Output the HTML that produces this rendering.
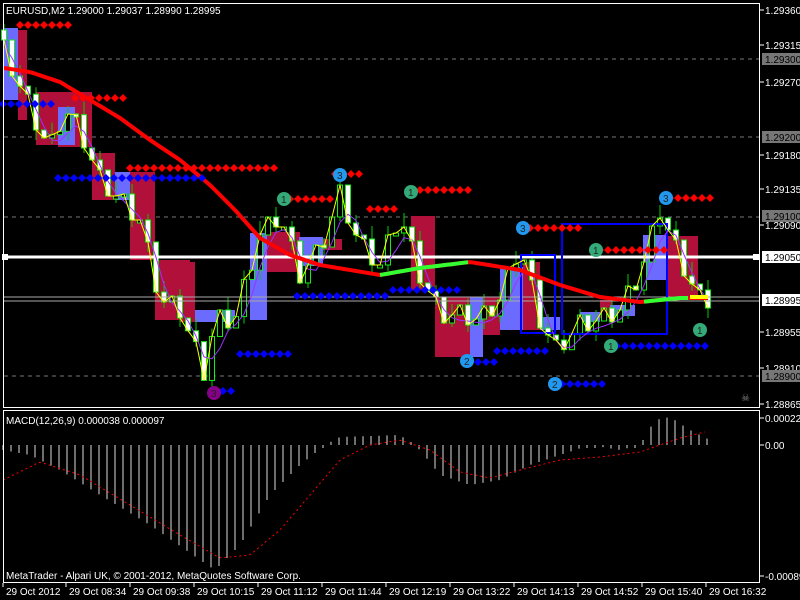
<!DOCTYPE html>
<html><head><meta charset="utf-8"><style>
html,body{margin:0;padding:0;background:#000;width:800px;height:600px;overflow:hidden}
svg{display:block}
text{font-family:"Liberation Sans",sans-serif;font-size:10px}
</style></head><body>
<svg id="s" width="800" height="600" xmlns="http://www.w3.org/2000/svg">
<rect width="800" height="600" fill="#000"/>
<g id="g"></g>
<rect x="3.5" y="3.5" width="756" height="404" fill="none" stroke="#fff"/>
<rect x="3.5" y="410.5" width="756" height="172" fill="none" stroke="#fff"/>
<text x="6" y="14" fill="#fff">EURUSD,M2  1.29000 1.29037 1.28990 1.28995</text>
<text x="6" y="424" fill="#fff">MACD(12,26,9) 0.000038 0.000097</text>
<text x="6" y="579" fill="#fff">MetaTrader - Alpari UK, © 2001-2012, MetaQuotes Software Corp.</text>
<text x="741" y="401" fill="#888" font-size="13">☠</text>
</svg>
<script>
var g=document.getElementById('g'),h='';
function L(k,x){for(var i=0;i<k.length-1;i++){if(x<=k[i+1][0]){var t=(x-k[i][0])/(k[i+1][0]-k[i][0]);return k[i][1]+t*(k[i+1][1]-k[i][1]);}}return k[k.length-1][1];}
[59,137,217,376].forEach(function(y){h+='<line x1="4" x2="759" y1="'+y+'" y2="'+y+'" stroke="#777" stroke-dasharray="4,4"/>';});
var cr=[[18,30,27,120],[36,92,58,145],[58,92,92,147],[92,153,115,200],[130,172,155,260],[155,260,190,320],[180,262,195,322],[267,232,300,272],[323,239,342,250],[411,216,435,290],[435,297,483,357],[482,297,500,335],[523,262,540,330],[668,236,698,297],[600,300,612,318]];
var bl=[[3,28,18,100],[58,107,75,145],[115,172,130,200],[195,310,235,322],[250,233,267,320],[299,237,323,266],[470,297,483,357],[500,267,523,330],[540,317,560,330],[610,305,635,316],[643,235,668,280],[580,312,600,322]];
cr.forEach(function(r){h+='<rect x="'+r[0]+'" y="'+r[1]+'" width="'+(r[2]-r[0])+'" height="'+(r[3]-r[1])+'" fill="#b0103a"/>';});
bl.forEach(function(r){h+='<rect x="'+r[0]+'" y="'+r[1]+'" width="'+(r[2]-r[0])+'" height="'+(r[3]-r[1])+'" fill="#6b6bff"/>';});
var K=[[4,50],[35,120],[50,150],[65,110],[80,130],[100,180],[120,200],[140,220],[160,300],[180,310],[205,375],[215,320],[235,320],[260,235],[280,215],[300,275],[320,250],[340,195],[360,245],[380,265],[400,215],[420,275],[440,315],[460,315],[480,320],[500,300],[520,245],[540,320],[556,350],[580,325],[600,320],[620,310],[640,275],[660,210],[680,260],[700,300],[708,300]];
var c=[];
for(var i=0;i<=88;i++){var x=4+8*i;var y=L(K,x)+((i%3==0)?-10:(i%3==1?8:0));c.push([x,y]);}
for(var i=0;i<c.length;i++){var x=c[i][0],y=c[i][1],o=i?c[i-1][1]:y-10;var t=Math.min(o,y),b=Math.max(o,y);if(b-t<3)b=t+3;
 if(i%2==0)h+='<line x1="'+x+'" x2="'+x+'" y1="'+(t-6-(i*7%9))+'" y2="'+(b+4+(i*5%7))+'" stroke="#0c0"/>';
 h+='<rect x="'+(x-2.5)+'" y="'+t+'" width="5" height="'+(b-t)+'" fill="'+(y>o?'#fff':'#000')+'" stroke="#1e1"/>';}
h+='<line x1="4" x2="759" y1="297" y2="297" stroke="#aaa"/><line x1="4" x2="759" y1="301" y2="301" stroke="#aaa"/>';
h+='<line x1="4" x2="759" y1="257" y2="257" stroke="#fff" stroke-width="3"/><rect x="2" y="254" width="6" height="6" fill="#fff"/><rect x="753" y="254" width="7" height="6" fill="#fff"/>';
h+='<rect x="521" y="255" width="34" height="78" fill="none" stroke="#00f" stroke-width="2"/><rect x="562" y="224" width="105" height="110" fill="none" stroke="#00f" stroke-width="2"/>';
var p='';for(var i=0;i<c.length;i++){var a=c[Math.max(0,i-2)][1],b=c[i][1],d=c[Math.max(0,i-1)][1];p+=(i?'L':'M')+c[i][0]+','+((a+b+d)/3+6).toFixed(1);}
h+='<path d="'+p+'" fill="none" stroke="#93f"/>';
p='';c.forEach(function(q,i){p+=(i?'L':'M')+q[0]+','+q[1];});h+='<path d="'+p+'" fill="none" stroke="#ff0"/>';
var M=[[4,68],[30,72],[60,82],[90,100],[120,118],[150,140],[180,160],[210,185],[235,210],[260,238],[290,255],[320,265],[380,275],[420,268],[470,262],[520,270],[560,285],[600,297],[640,302],[680,298],[708,298]];
p='';for(var x=4;x<=708;x+=4)p+=(x>4?'L':'M')+x+','+L(M,x).toFixed(1);
h+='<path d="'+p+'" fill="none" stroke="#f00" stroke-width="4" stroke-linejoin="round"/>';
p='';for(var x=380;x<=470;x+=4)p+=(x>380?'L':'M')+x+','+L(M,x).toFixed(1);h+='<path d="'+p+'" fill="none" stroke="#3f3" stroke-width="4"/>';
p='';for(var x=644;x<=690;x+=4)p+=(x>644?'L':'M')+x+','+L(M,x).toFixed(1);h+='<path d="'+p+'" fill="none" stroke="#3f3" stroke-width="4"/>';
h+='<line x1="690" x2="708" y1="297" y2="297" stroke="#ff0" stroke-width="4"/>';
var D=[['r',25,20,68],['r',98,75,125],['r',168,130,278],['b',104,3,52],['b',178,58,205],['r',174,335,365],['r',199,290,330],['r',190,420,475],['r',209,370,400],['b',296,297,390],['b',290,393,460],['b',354,240,295],['b',391,215,237],['b',362,478,494],['b',351,497,550],['b',384,562,605],['r',228,530,580],['r',250,600,665],['b',346,617,710],['r',198,670,710]];
D.forEach(function(d){for(var x=d[2];x<=d[3];x+=8)h+='<path d="M'+x+','+(d[1]-4)+'l4,4l-4,4l-4,-4z" fill="'+(d[0]=='r'?'#f00':'#00f')+'"/>';});
var C=[[214,393,'#808','3'],[284,199,'#3a7','1'],[340,175,'#29e','3'],[411,192,'#3a7','1'],[467,361,'#29e','2'],[523,228,'#29e','3'],[555,384,'#29e','2'],[596,250,'#3a7','1'],[611,346,'#3a7','1'],[666,198,'#29e','3'],[700,330,'#3a7','1']];
C.forEach(function(q){h+='<circle cx="'+q[0]+'" cy="'+q[1]+'" r="7" fill="'+q[2]+'"/><text x="'+(q[0]-3)+'" y="'+(q[1]+4)+'" fill="#222" font-size="11">'+q[3]+'</text>';});
var HK=[[3,-5],[30,-10],[60,-25],[100,-50],[150,-80],[200,-115],[215,-125],[240,-100],[270,-50],[300,-20],[325,0],[340,8],[400,10],[420,-5],[440,-30],[470,-40],[500,-35],[530,-20],[560,-10],[590,0],[620,-5],[640,0],[655,25],[670,28],[690,15],[710,5]];
for(var x=3;x<=710;x+=8){var v=L(HK,x);if(Math.abs(v)<2)v=v<0?-3:3;h+='<line x1="'+x+'" x2="'+x+'" y1="445" y2="'+(445-v)+'" stroke="#ddd"/>';}
var SK=[[3,480],[40,462],[80,475],[130,505],[180,535],[220,558],[250,555],[280,530],[310,495],[340,460],[370,445],[400,440],[430,450],[460,472],[490,478],[520,470],[560,460],[600,457],[640,452],[680,438],[705,432]];
p='';for(var x=3;x<=705;x+=3)p+=(x>3?'L':'M')+x+','+L(SK,x).toFixed(1);
h+='<path d="'+p+'" fill="none" stroke="#f00" stroke-dasharray="2,3"/>';
var A=[[10,'1.29360'],[45,'1.29315'],[82,'1.29270'],[155,'1.29180'],[189,'1.29135'],[225,'1.29090'],[332,'1.28955'],[368,'1.28910'],[404,'1.28865'],[418,'0.000224'],[445,'0.00'],[576,'-0.00089']];
A.forEach(function(a){h+='<line x1="760" x2="764" y1="'+a[0]+'" y2="'+a[0]+'" stroke="#fff"/><text x="765" y="'+(a[0]+4)+'" fill="#fff">'+a[1]+'</text>';});
[[59,'1.29300'],[137,'1.29200'],[216,'1.29100'],[376,'1.28900']].forEach(function(a){h+='<rect x="762" y="'+(a[0]-6)+'" width="38" height="12" fill="#777"/><text x="765" y="'+(a[0]+4)+'" fill="#000">'+a[1]+'</text>';});
[[257,'1.29050'],[300,'1.28995']].forEach(function(a){h+='<rect x="762" y="'+(a[0]-6)+'" width="38" height="12" fill="#fff"/><text x="765" y="'+(a[0]+4)+'" fill="#000">'+a[1]+'</text>';});
var T=[[3,'29 Oct 2012'],[66,'29 Oct 08:34'],[130,'29 Oct 09:38'],[194,'29 Oct 10:15'],[258,'29 Oct 11:12'],[322,'29 Oct 11:44'],[386,'29 Oct 12:19'],[450,'29 Oct 13:22'],[514,'29 Oct 14:13'],[578,'29 Oct 14:52'],[642,'29 Oct 15:40'],[706,'29 Oct 16:32']];
T.forEach(function(t){h+='<line x1="'+t[0]+'" x2="'+t[0]+'" y1="583" y2="587" stroke="#fff"/><text x="'+(t[0]+3)+'" y="595" fill="#fff">'+t[1]+'</text>';});
g.innerHTML=h;
</script>
</body></html>
